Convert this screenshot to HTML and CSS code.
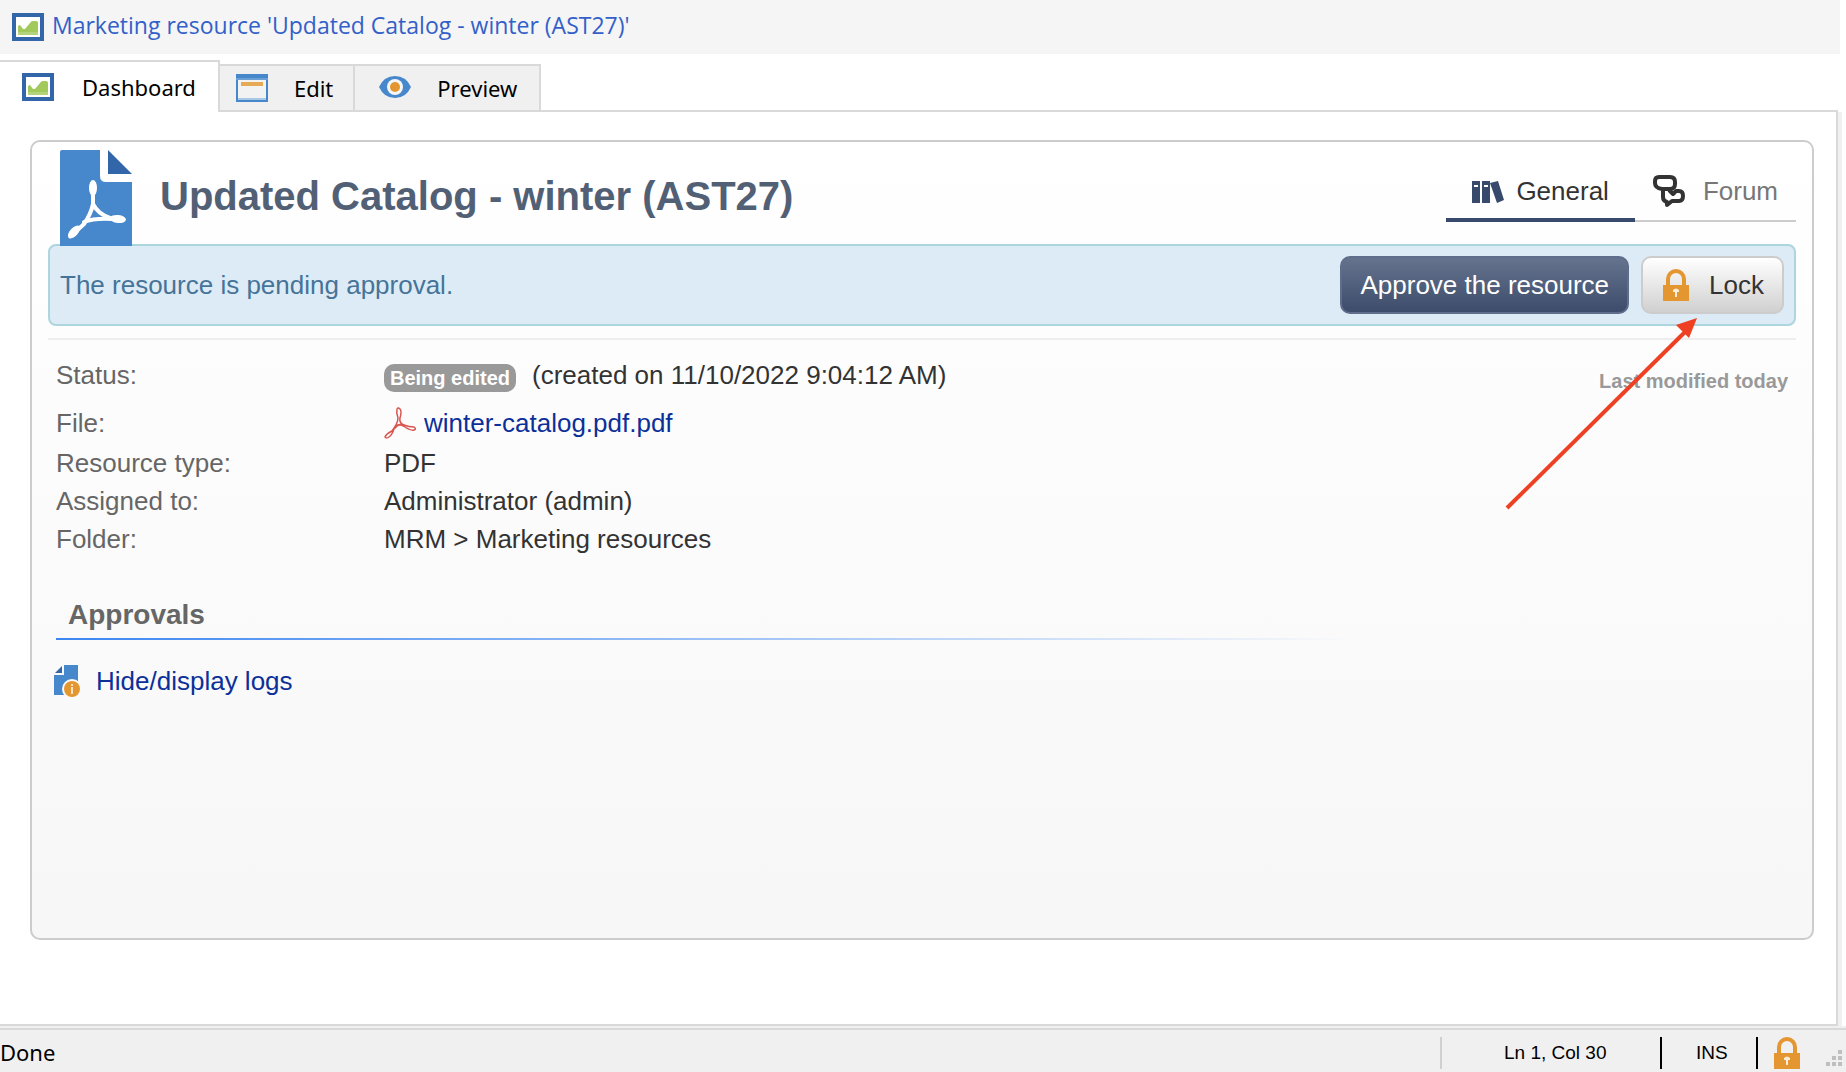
FILE: index.html
```html
<!DOCTYPE html>
<html lang="en">
<head>
<meta charset="utf-8">
<title>Marketing resource 'Updated Catalog - winter (AST27)'</title>
<link rel="stylesheet" href="styles.css">
</head>
<body>
<svg class="defs" aria-hidden="true">
  <symbol id="chart" viewBox="0 0 32 28">
    <rect width="32" height="28" fill="#3366a8"/>
    <rect x="4" y="4" width="24" height="20" fill="#fff"/>
    <path d="M6 21V14q0-2 2-2l3 4h2l5-6q1-2 3-2h3q2 0 2 2v11z" fill="#a1c95c"/>
    <path d="M6 19h20v3H6z" fill="#b4d37d"/>
  </symbol>
  <symbol id="padlock" viewBox="0 0 26 32">
    <path d="M5 17V10a8 8 0 0 1 16 0v7" fill="none" stroke="#e49631" stroke-width="4"/>
    <rect y="16" width="26" height="16" fill="#e49631"/>
    <path d="M10 21q3-3 6 0v2h-2v5h-2v-5h-2z" fill="#fbeed8"/>
  </symbol>
</svg>
<header class="titlebar">
  <svg class="icon-window"><use href="#chart"/></svg>
  <h1 class="window-title">Marketing resource 'Updated Catalog - winter (AST27)'</h1>
</header>
<nav class="tabs">
  <button class="tab tab-active"><svg class="icon-window"><use href="#chart"/></svg>Dashboard</button>
  <button class="tab tab-edit">
    <svg class="icon-window" viewBox="0 0 32 28"><rect width="32" height="28" fill="#4787cb"/><rect y="4" width="32" height="2" fill="#6a9fd6"/><rect x="2" y="6" width="28" height="18" fill="#f2f2f2"/><rect x="2" y="24" width="28" height="2" fill="#a9c8e8"/><rect x="5" y="8" width="22" height="4" fill="#e6a954"/></svg>Edit</button>
  <button class="tab tab-preview">
    <svg class="icon-window" viewBox="0 0 32 28"><path d="M0 13Q5 2 16 2t16 11q-5 11-16 11T0 13z" fill="#4787cb"/><circle cx="16" cy="13" r="8" fill="#f4f6f8"/><circle cx="16" cy="13" r="5" fill="#e49631"/></svg>Preview</button>
</nav>
<main class="content">
  <section class="card">
    <div class="card-head">
      <svg class="icon-pdf" viewBox="0 0 72 96">
        <path d="M0 2Q0 0 2 0H40V26Q40 32 46 32H72V96H0z" fill="#4787cb"/>
        <path d="M48 0L72 24H48z" fill="#3366a8"/>
        <path d="M33 36V54Q38 64 50 68L60 70M33 54Q31 64 24 74L12 85M24 72Q34 68 52 69" fill="none" stroke="#fff" stroke-width="4" stroke-linecap="round" stroke-linejoin="round"/>
        <ellipse cx="33" cy="38" rx="4" ry="8" fill="#fff"/>
        <ellipse cx="58" cy="69" rx="8" ry="4" fill="#fff" transform="rotate(6 58 69)"/>
        <ellipse cx="14" cy="82" rx="8" ry="4" fill="#fff" transform="rotate(-48 14 82)"/>
      </svg>
      <h2 class="resource-title">Updated Catalog - winter (AST27)</h2>
      <nav class="views">
        <a class="view view-active" href="#general">
          <svg class="icon-view" viewBox="0 0 32 32"><path d="M0 6h8v22H0zM10 6h8v22h-8zM18 8l8-2 6 19-7 3z" fill="#374a6b"/><path d="M2 10h4v2H2zM12 10h4v2h-4z" fill="#fff"/></svg>General</a>
        <a class="view" href="#forum">
          <svg class="icon-view" viewBox="0 0 32 32"><g fill="none" stroke="#333" stroke-width="4" stroke-linejoin="round"><path d="M6 2h11q5 0 5 5v2q0 5-5 5H9q-7-1-7-6V6q0-4 4-4z"/><path d="M10 14v8q0 4 4 5v3l5-4h7q4 0 4-5t-4-5h-3l-3 3-4-4"/></g></svg>Forum</a>
      </nav>
    </div>
    <div class="notice">
      <p class="notice-text">The resource is pending approval.</p>
      <button class="button button-primary">Approve the resource</button>
      <button class="button button-lock"><svg class="icon-lock"><use href="#padlock"/></svg>Lock</button>
    </div>
    <div class="details">
      <dl class="fields">
        <dt class="row-status">Status:</dt><dd class="row-status"><span class="badge">Being edited</span>(created on 11/10/2022 9:04:12 AM)</dd>
        <dt class="row-file">File:</dt><dd class="row-file"><svg class="icon-acrobat" viewBox="0 0 32 32"><g fill="none" stroke="#d8564f" stroke-width="1.5"><path d="M13 2q1-2 3 0t0 9q-1 5 4 7t10 2q3 2 0 3t-9-3-9-1"/><path d="M13 2q-1 4 1 9 0 5-6 13-6 3-7 6 1 2 4 0t5-8q3-4 7-5"/></g></svg><a class="link" href="#file">winter-catalog.pdf.pdf</a></dd>
        <dt>Resource type:</dt><dd>PDF</dd>
        <dt>Assigned to:</dt><dd>Administrator (admin)</dd>
        <dt>Folder:</dt><dd>MRM &gt; Marketing resources</dd>
      </dl>
      <p class="modified">Last modified today</p>
    </div>
    <h3 class="section-title">Approvals</h3>
    <a class="link logs" href="#logs">
      <svg class="icon-logs" viewBox="0 0 26 32"><path d="M10 0h14v30H0V10h10z" fill="#4787cb"/><path d="M8 1v7H1z" fill="#3366a8"/><circle cx="18" cy="24" r="10" fill="#fafafa"/><circle cx="18" cy="24" r="8" fill="#e49631"/><path d="M17 19h2v2h-2zM17 22h2v7h-2z" fill="#fbe3bd"/></svg>Hide/display logs</a>
    <svg class="arrow" viewBox="0 0 194 194" aria-hidden="true"><path d="M2 192L182 14" stroke="#ee4023" stroke-width="4"/><path d="M192 2L171 9 184 22z" fill="#ee4023"/></svg>
  </section>
</main>
<footer class="statusbar">
  <span class="status-message">Done</span>
  <span class="status-position">Ln 1, Col 30</span>
  <span class="status-mode">INS</span>
  <span class="status-lock"><svg class="icon-lock"><use href="#padlock"/></svg></span>
  <svg class="grip" viewBox="0 0 16 16"><path d="M12 0h4v4h-4zM6 6h4v4H6zM12 6h4v4h-4zM0 12h4v4H0zM6 12h4v4H6zM12 12h4v4h-4z" fill="#bfbfbf"/></svg>
</footer>
</body>
</html>
```

FILE: styles.css
```css
* { box-sizing: border-box; }
body {
  margin: 0;
  min-height: 100vh;
  display: flex;
  flex-direction: column;
  background: #fff;
  color: #333;
  font: 26px/38px "Liberation Sans", Arial, sans-serif;
}
h1, h2, h3, p, dl, dd { margin: 0; }
button { font: inherit; }
svg { flex: none; }
.defs { position: absolute; width: 0; height: 0; }
.icon-window { width: 32px; height: 28px; }
.icon-view { width: 32px; height: 32px; }
.icon-lock { width: 26px; height: 32px; }

.titlebar {
  display: flex;
  align-items: center;
  gap: 8px;
  height: 54px;
  margin-right: 6px;
  padding-left: 12px;
  background: #f5f5f5;
}
.window-title {
  color: #3360c8;
  font: 23px/50px "Open Sans", sans-serif;
  padding-bottom: 4px;
}

.tabs {
  display: flex;
  align-items: flex-end;
  height: 58px;
  margin-right: 8px;
  border-bottom: 2px solid #d9d9d9;
}
.tab {
  display: flex;
  align-items: center;
  gap: 26px;
  height: 46px;
  padding: 0 20px 0 16px;
  border: 2px solid #d9d9d9;
  border-width: 2px 2px 0 0;
  background: #f0f0f0;
  color: #000;
  font: 22px/44px "Noto Sans", sans-serif;
}
.tab-active {
  gap: 28px;
  height: 52px;
  margin-bottom: -2px;
  padding: 0 22px;
  background: #fff;
}
.tab-preview { padding: 0 22px 0 24px; }

.content {
  flex: 1;
  margin-right: 4px;
  padding: 28px 24px 86px 30px;
  border-right: 4px solid #f0f0f0;
  box-shadow: inset -2px 0 #d9d9d9, inset 0 -2px #d9d9d9;
}
.card {
  position: relative;
  height: 100%;
  min-height: 800px;
  padding: 8px 16px;
  border: 2px solid #ccc;
  border-radius: 10px;
  background: linear-gradient(#fff, #f7f7f7);
}
.card-head {
  display: flex;
  align-items: flex-start;
  height: 94px;
  padding-left: 12px;
}
.icon-pdf { position: relative; width: 72px; height: 96px; }
.resource-title {
  flex: 1;
  padding: 22px 0 0 28px;
  color: #526075;
  font-size: 40px;
  line-height: 48px;
}
.views { display: flex; padding-top: 16px; }
.view {
  display: flex;
  gap: 18px;
  align-items: center;
  height: 56px;
  padding: 0 18px 4px;
  border-bottom: 2px solid #ccc;
  color: #777;
  text-decoration: none;
}
.view-active {
  gap: 12px;
  padding: 0 26px 2px;
  border-bottom: 4px solid #374a6b;
  color: #333;
}

.notice {
  display: flex;
  align-items: center;
  gap: 12px;
  height: 82px;
  padding: 0 10px;
  border: 2px solid #acd5de;
  border-radius: 8px;
  background: #ddebf6;
}
.notice-text { flex: 1; color: #467498; }
.button {
  display: flex;
  align-items: center;
  height: 58px;
  padding: 0 18px;
  border: 2px solid #ccc;
  border-radius: 10px;
}
.button-primary {
  border-color: #5f6d8b;
  background: linear-gradient(#65738e, #3c4c6a);
  color: #fff;
}
.button-lock {
  gap: 20px;
  padding-left: 20px;
  background: linear-gradient(#fff, #d0d0d0);
  color: #333;
}

.details {
  display: flex;
  justify-content: space-between;
  margin-top: 12px;
  padding: 16px 8px 0;
  border-top: 2px solid #eee;
}
.fields { display: grid; grid-template-columns: 328px auto; }
.fields dt { color: #666; }
.fields dd { display: flex; align-items: center; }
.fields .row-status { height: 46px; line-height: 38px; align-items: flex-start; }
.fields .row-file { height: 42px; line-height: 42px; }
.badge {
  height: 28px;
  margin: 8px 16px 0 0;
  padding: 0 6px;
  border-radius: 10px;
  background: #999;
  color: #fff;
  font-size: 20px;
  font-weight: bold;
  line-height: 28px;
}
.icon-acrobat { width: 32px; height: 32px; margin-right: 8px; }
.link { color: #0c3099; text-decoration: none; }
.modified { padding-top: 8px; color: #999; font-size: 20px; font-weight: bold; line-height: 34px; }
.section-title {
  margin: 38px 8px 22px;
  padding: 0 12px 6px;
  color: #666;
  font-size: 28px;
  background: linear-gradient(90deg, #3c86f2, #fafafa 75%) bottom / 100% 2px no-repeat;
}
.logs { display: inline-flex; align-items: center; gap: 16px; padding-left: 6px; }
.icon-logs { width: 26px; height: 32px; }
.arrow {
  position: absolute;
  top: 174px;
  right: 113px;
  width: 194px;
  height: 194px;
}

.statusbar {
  display: flex;
  align-items: center;
  height: 44px;
  margin-top: 2px;
  padding-top: 4px;
  border-top: 2px solid #d9d9d9;
  box-shadow: 0 -2px #f0f0f0;
  background: #f0f0f0;
  color: #000;
  font-size: 19px;
  line-height: 32px;
}
.status-message { flex: 1; font: 22px/32px "Noto Sans", sans-serif; padding-bottom: 2px; }
.status-position { width: 220px; border-left: 2px solid #d0d0d0; padding-left: 62px; }
.status-mode { width: 96px; border-left: 2px solid #000; padding-left: 34px; }
.status-lock { display: flex; border-left: 2px solid #000; padding-left: 16px; }
.grip { width: 16px; height: 16px; margin: 10px 4px 0 26px; }
```
